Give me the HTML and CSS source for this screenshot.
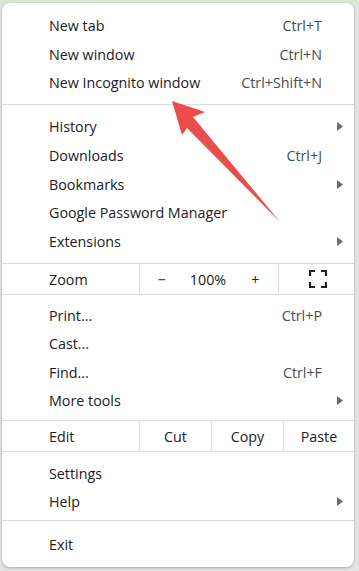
FILE: index.html
```html
<!DOCTYPE html>
<html lang="en">
<head>
    <meta charset="UTF-8">
    <title>Menu</title>
    <link rel="stylesheet" href="styles.css">
</head>
<body>
    <div class="menu">
        <div class="group first">
            <div class="item"><span class="label">New tab</span><span class="key">Ctrl+T</span></div>
            <div class="item"><span class="label">New window</span><span class="key">Ctrl+N</span></div>
            <div class="item"><span class="label">New Incognito window</span><span class="key">Ctrl+Shift+N</span></div>
        </div>
        <div class="group">
            <div class="item"><span class="label">History</span><svg class="sub" viewBox="0 0 6 9"><polygon points="0,0 6,4.5 0,9"/></svg></div>
            <div class="item"><span class="label">Downloads</span><span class="key">Ctrl+J</span></div>
            <div class="item"><span class="label">Bookmarks</span><svg class="sub" viewBox="0 0 6 9"><polygon points="0,0 6,4.5 0,9"/></svg></div>
            <div class="item"><span class="label">Google Password Manager</span></div>
            <div class="item"><span class="label">Extensions</span><svg class="sub" viewBox="0 0 6 9"><polygon points="0,0 6,4.5 0,9"/></svg></div>
        </div>
        <div class="row zoom">
            <span class="label">Zoom</span>
            <div class="zoom-ctl">
                <span class="minus">&minus;</span>
                <span class="pct">100%</span>
                <span class="plus">+</span>
            </div>
            <div class="full">
                <svg viewBox="0 0 18 18" width="18" height="18">
                    <path d="M1 6V1h5M12 1h5v5M17 12v5h-5M6 17H1v-5" fill="none" stroke="#202124" stroke-width="2.2"/>
                </svg>
            </div>
        </div>
        <div class="group tools">
            <div class="item"><span class="label">Print...</span><span class="key">Ctrl+P</span></div>
            <div class="item"><span class="label">Cast...</span></div>
            <div class="item"><span class="label">Find...</span><span class="key">Ctrl+F</span></div>
            <div class="item"><span class="label">More tools</span><svg class="sub" viewBox="0 0 6 9"><polygon points="0,0 6,4.5 0,9"/></svg></div>
        </div>
        <div class="row edit">
            <span class="label">Edit</span>
            <span class="cell">Cut</span>
            <span class="cell">Copy</span>
            <span class="cell">Paste</span>
        </div>
        <div class="group settings">
            <div class="item"><span class="label">Settings</span></div>
            <div class="item"><span class="label">Help</span><svg class="sub" viewBox="0 0 6 9"><polygon points="0,0 6,4.5 0,9"/></svg></div>
        </div>
        <div class="group last">
            <div class="item"><span class="label">Exit</span></div>
        </div>
    </div>

    <svg class="pointer" width="359" height="571" viewBox="0 0 359 571">
        <polygon points="172,101 205,112 193,117 280,222 187,128 182,135" fill="#eb4c4c"/>
    </svg>
</body>
</html>
```

FILE: styles.css
```css
* {
    box-sizing: border-box;
    margin: 0;
    padding: 0;
}

body {
    background: linear-gradient(#dbe6d8 0, #dbe6d8 4px, #e3e3e3 4px);
    font-family: 'Open Sans', 'Noto Sans', sans-serif;
    font-size: 14.3px;
    color: #202124;
    height: 571px;
    overflow: hidden;
}

.menu {
    background-color: #fff;
    border-radius: 8px;
    box-shadow: 0 1px 3px rgba(0, 0, 0, 0.25);
    margin: 3px 0 0 2px;
    width: 352px;
    height: 564px;
}

.group {
    padding: 7px 0;
    border-bottom: 1px solid #dadce0;
}

.group.first {
    padding-top: 8px;
}

.group.tools {
    padding: 6px 0 5px;
}

.group.settings {
    padding: 7px 0 4px;
}

.group.last {
    border-bottom: none;
    padding-top: 9px;
}

.item {
    display: flex;
    align-items: center;
    height: 28.75px;
    padding: 0 32px 0 47px;
}

.tools .item,
.settings .item {
    height: 28.5px;
}

.item .label {
    flex: 1;
}

.key {
    color: #4a4d52;
}

.sub {
    width: 6px;
    height: 9px;
    fill: #6b6b6b;
    margin-right: -21px;
}

.row {
    display: flex;
    align-items: center;
    height: 31px;
    border-bottom: 1px solid #dadce0;
}

.row .label {
    width: 137px;
    padding-left: 47px;
}

.zoom-ctl {
    display: flex;
    align-items: center;
    width: 140px;
    height: 100%;
    border-left: 1px solid #dadce0;
    border-right: 1px solid #dadce0;
}

.zoom-ctl .minus {
    width: 44px;
    text-align: center;
}

.zoom-ctl .pct {
    width: 50px;
    text-align: center;
}

.zoom-ctl .plus {
    width: 46px;
    text-align: center;
}

.full {
    flex: 1;
    display: flex;
    align-items: center;
    justify-content: center;
    padding-left: 3px;
}

.full svg {
    display: block;
}

.edit .cell {
    height: 100%;
    display: flex;
    align-items: center;
    justify-content: center;
    border-left: 1px solid #dadce0;
    width: 72px;
}

.edit .cell:last-child {
    flex: 1;
}

.pointer {
    position: absolute;
    left: 0;
    top: 0;
    pointer-events: none;
}
```
